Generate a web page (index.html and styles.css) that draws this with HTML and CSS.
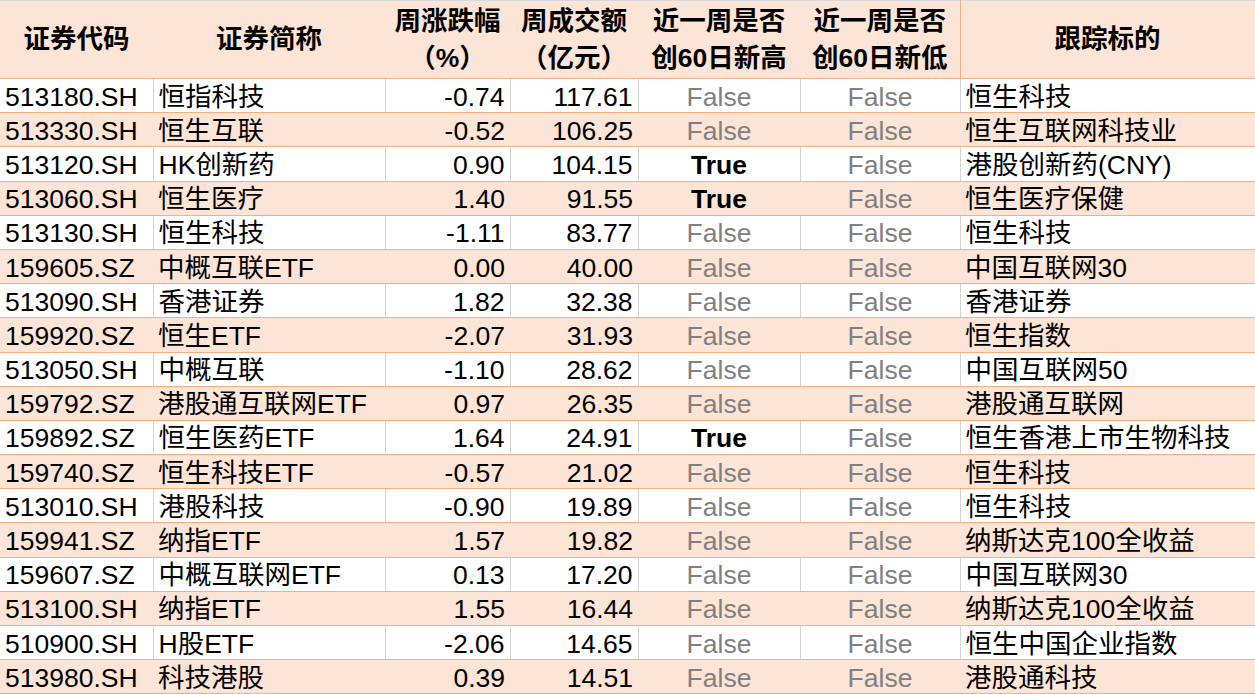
FILE: index.html
```html
<!DOCTYPE html>
<html lang="zh">
<head>
<meta charset="utf-8">
<title>ETF</title>
<link rel="stylesheet" href="styles.css">
</head>
<body>
<table class="grid">
<colgroup>
<col class="c1"><col class="c2"><col class="c3"><col class="c4"><col class="c5"><col class="c6"><col class="c7">
</colgroup>
<thead>
<tr class="head">
<th>证券代码</th><th>证券简称</th><th>周涨跌幅<br>（%）</th><th>周成交额<br>（亿元）</th><th>近一周是否<br>创60日新高</th><th>近一周是否<br>创60日新低</th><th class="last">跟踪标的</th>
</tr>
</thead>
<tbody>
<tr class="w"><td>513180.SH</td><td>恒指科技</td><td class="num">-0.74</td><td class="num">117.61</td><td class="f">False</td><td class="f">False</td><td class="last">恒生科技</td></tr>
<tr class="p"><td>513330.SH</td><td>恒生互联</td><td class="num">-0.52</td><td class="num">106.25</td><td class="f">False</td><td class="f">False</td><td class="last">恒生互联网科技业</td></tr>
<tr class="w"><td>513120.SH</td><td>HK创新药</td><td class="num">0.90</td><td class="num">104.15</td><td class="t">True</td><td class="f">False</td><td class="last">港股创新药(CNY)</td></tr>
<tr class="p"><td>513060.SH</td><td>恒生医疗</td><td class="num">1.40</td><td class="num">91.55</td><td class="t">True</td><td class="f">False</td><td class="last">恒生医疗保健</td></tr>
<tr class="w"><td>513130.SH</td><td>恒生科技</td><td class="num">-1.11</td><td class="num">83.77</td><td class="f">False</td><td class="f">False</td><td class="last">恒生科技</td></tr>
<tr class="p"><td>159605.SZ</td><td>中概互联ETF</td><td class="num">0.00</td><td class="num">40.00</td><td class="f">False</td><td class="f">False</td><td class="last">中国互联网30</td></tr>
<tr class="w"><td>513090.SH</td><td>香港证券</td><td class="num">1.82</td><td class="num">32.38</td><td class="f">False</td><td class="f">False</td><td class="last">香港证券</td></tr>
<tr class="p"><td>159920.SZ</td><td>恒生ETF</td><td class="num">-2.07</td><td class="num">31.93</td><td class="f">False</td><td class="f">False</td><td class="last">恒生指数</td></tr>
<tr class="w"><td>513050.SH</td><td>中概互联</td><td class="num">-1.10</td><td class="num">28.62</td><td class="f">False</td><td class="f">False</td><td class="last">中国互联网50</td></tr>
<tr class="p"><td>159792.SZ</td><td>港股通互联网ETF</td><td class="num">0.97</td><td class="num">26.35</td><td class="f">False</td><td class="f">False</td><td class="last">港股通互联网</td></tr>
<tr class="w"><td>159892.SZ</td><td>恒生医药ETF</td><td class="num">1.64</td><td class="num">24.91</td><td class="t">True</td><td class="f">False</td><td class="last">恒生香港上市生物科技</td></tr>
<tr class="p"><td>159740.SZ</td><td>恒生科技ETF</td><td class="num">-0.57</td><td class="num">21.02</td><td class="f">False</td><td class="f">False</td><td class="last">恒生科技</td></tr>
<tr class="w"><td>513010.SH</td><td>港股科技</td><td class="num">-0.90</td><td class="num">19.89</td><td class="f">False</td><td class="f">False</td><td class="last">恒生科技</td></tr>
<tr class="p"><td>159941.SZ</td><td>纳指ETF</td><td class="num">1.57</td><td class="num">19.82</td><td class="f">False</td><td class="f">False</td><td class="last">纳斯达克100全收益</td></tr>
<tr class="w"><td>159607.SZ</td><td>中概互联网ETF</td><td class="num">0.13</td><td class="num">17.20</td><td class="f">False</td><td class="f">False</td><td class="last">中国互联网30</td></tr>
<tr class="p"><td>513100.SH</td><td>纳指ETF</td><td class="num">1.55</td><td class="num">16.44</td><td class="f">False</td><td class="f">False</td><td class="last">纳斯达克100全收益</td></tr>
<tr class="w"><td>510900.SH</td><td>H股ETF</td><td class="num">-2.06</td><td class="num">14.65</td><td class="f">False</td><td class="f">False</td><td class="last">恒生中国企业指数</td></tr>
<tr class="p"><td>513980.SH</td><td>科技港股</td><td class="num">0.39</td><td class="num">14.51</td><td class="f">False</td><td class="f">False</td><td class="last">港股通科技</td></tr>
</tbody>
</table>
</body>
</html>
```

FILE: styles.css
```css
html, body {
  margin: 0;
  padding: 0;
  background: #ffffff;
}

.grid {
  border-collapse: collapse;
  table-layout: fixed;
  width: 1255px;
  font-family: "Liberation Sans", "Noto Sans CJK SC", sans-serif;
  font-size: 26.5px;
  color: #000;
  border-top: 1px solid #d9d9d9;
}

.c1 { width: 153px; }
.c2 { width: 232px; }
.c3 { width: 125px; }
.c4 { width: 128px; }
.c5 { width: 162px; }
.c6 { width: 160px; }
.c7 { width: 295px; }

.grid th,
.grid td {
  padding: 0 0 0 5px;
  white-space: nowrap;
  overflow: hidden;
  text-align: left;
}

.head th {
  background: #fce4d6;
  font-weight: 700;
  text-align: center;
  line-height: 37px;
  height: 77px;
  padding: 0;
  border-bottom: 1px solid #f4b084;
  vertical-align: middle;
}

.head th.last {
  border-left: 1px solid #f4b084;
  border-right: 1px solid #f4b084;
}

.grid td {
  line-height: 26px;
  height: 31.2px;
  padding-top: 2px;
  padding-bottom: 0;
  vertical-align: middle;
  border-bottom: 1px solid #f4b084;
}

.w td {
  background: #ffffff;
  border-left: 1px solid #d4d4d4;
}

.w td:first-child {
  border-left: none;
}

.p td {
  background: #fce4d6;
}

.grid td.last {
  border-right: 1px solid #f4b084;
}

.grid td.num {
  text-align: right;
  padding-left: 0;
  padding-right: 5px;
}

.grid td.f {
  text-align: center;
  color: #808080;
  padding-left: 0;
}

.grid td.t {
  text-align: center;
  font-weight: 700;
  padding-left: 0;
}
```
